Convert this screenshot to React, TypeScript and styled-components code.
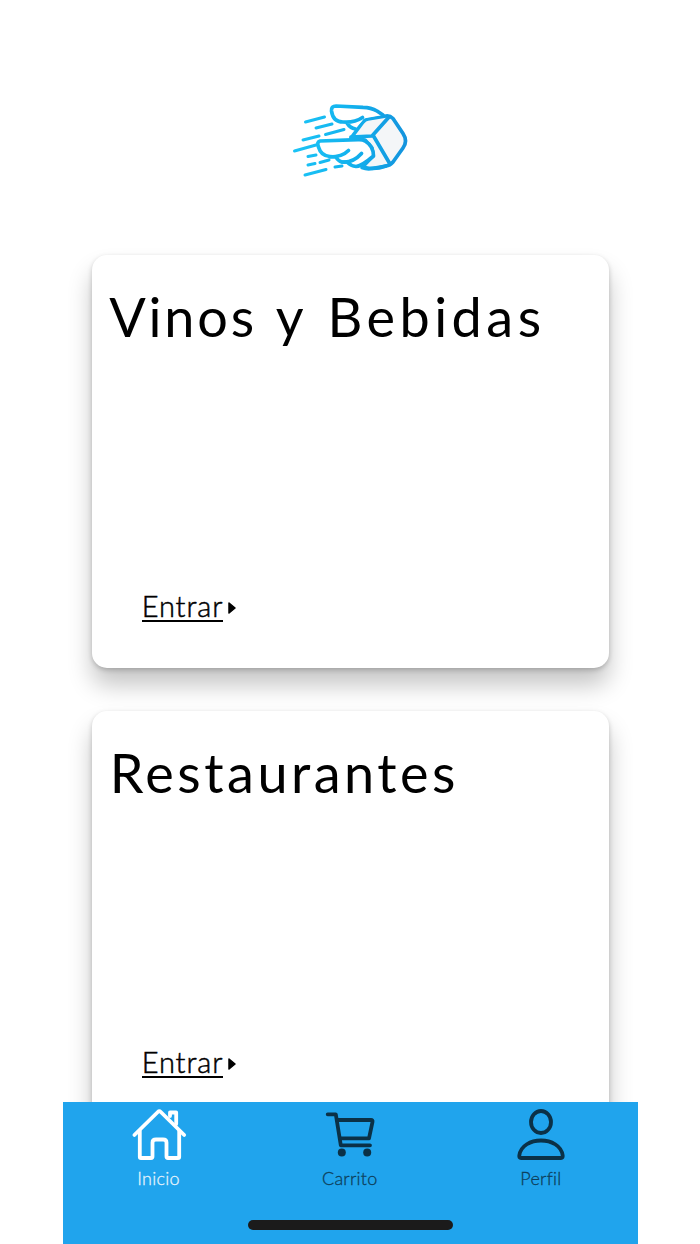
import React from "react";
import styled, { createGlobalStyle } from "styled-components";

const GlobalStyle = createGlobalStyle`
  *, *::before, *::after { box-sizing: border-box; }
  body { margin: 0; background: #fff; overflow: hidden; }
`;

const Screen = styled.div`
  width: 574.5px;
  height: 1244px;
  margin-left: 63px;
  display: flex;
  flex-direction: column;
  overflow: hidden;
  background: #fff;
  color: #000;
  font-family: Lato, "Liberation Sans", sans-serif;
`;

const Header = styled.header`
  flex: none;
  height: 255px;
  padding-top: 95px;
  display: flex;
  justify-content: center;
  align-items: flex-start;
`;

const Scroll = styled.div`
  height: 1101.5px;
  flex: none;
  overflow: hidden;
`;

const CardList = styled.div`
  display: flex;
  flex-direction: column;
  align-items: center;
  gap: 43px;
`;

const Card = styled.section`
  width: 517px;
  height: 413px;
  flex: none;
  display: flex;
  flex-direction: column;
  justify-content: space-between;
  align-items: flex-start;
  border-radius: 15px;
  background: #fff;
  box-shadow: 0 17px 24px rgba(0, 0, 0, 0.23), 0 2px 5px rgba(0, 0, 0, 0.2);
`;

const Title = styled.h2<{ $indent: number }>`
  margin: 0;
  padding: 30px 0 0 ${(p) => p.$indent}px;
  font-size: 54px;
  line-height: 64px;
  font-weight: 400;
  letter-spacing: 3.5px;
  word-spacing: 1.5px;
  white-space: nowrap;
`;

const Word = styled.span<{ $spacing: number }>`
  letter-spacing: ${(p) => p.$spacing}px;
`;

const Enter = styled.a`
  display: flex;
  align-items: center;
  gap: 5px;
  margin: 0 0 46px 50px;
  font-size: 29px;
  font-weight: 300;
  color: #000;
`;

const EnterText = styled.span`
  display: block;
  height: 31px;
  line-height: 29px;
  width: 81px;
  border-bottom: 2px solid #000;
  letter-spacing: 0.9px;
  -webkit-text-stroke: 0.5px #000;
  white-space: nowrap;
`;

const Arrow = styled.svg`
  display: block;
  margin-top: 3px;
`;

const Footer = styled.footer`
  flex: none;
  height: 142.5px;
  display: flex;
  flex-direction: column;
  justify-content: space-between;
  align-items: center;
  padding-bottom: 14px;
  background: #20a4ed;
`;

const Tabs = styled.nav`
  width: 100%;
  padding-right: 1px;
  display: grid;
  grid-template-columns: repeat(3, 1fr);
`;

const Tab = styled.div<{ $active?: boolean }>`
  display: flex;
  flex-direction: column;
  align-items: center;
  padding-top: 3.5px;
  color: ${(p) => (p.$active ? "#ffffff" : "#0b3147")};

  span {
    margin-top: 1px;
    font-size: 18px;
    line-height: 24px;
    letter-spacing: 0.25px;
    font-weight: 300;
    -webkit-text-stroke: 0.3px currentColor;
    opacity: 0.88;
  }
`;

const Icon = styled.svg`
  display: block;
  fill: none;
  stroke: currentColor;
  stroke-width: 3.8px;
  stroke-linecap: round;
  stroke-linejoin: round;
`;

const HomeBar = styled.div`
  width: 205px;
  height: 10px;
  border-radius: 5px;
  background: #1b1b1b;
`;

const Logo = () => (
  <svg width="130" height="90" viewBox="0 0 130 90" fill="none">
    <defs>
      <linearGradient id="sky" x1="8" y1="0" x2="122" y2="0" gradientUnits="userSpaceOnUse">
        <stop offset="0" stopColor="#1cc4f6" />
        <stop offset="0.5" stopColor="#12b2ee" />
        <stop offset="1" stopColor="#1493dd" />
      </linearGradient>
    </defs>
    <g stroke="url(#sky)" strokeWidth="3.7" strokeLinecap="round" strokeLinejoin="round">
      <path fill="#f4f6f8" d="M66 43 78 27Q80 24.500 83 24L101 21Q105 20.500 108 23.500L118 38.500Q123 46 118 53L108 67Q105 70.500 101 71L87 73.500Q82 74.500 77 72.500L88 61 87 53 80 45Z" />
      <path d="M66 42 87 41 104 22M88.500 41 105 69" />
      <path fill="#fff" d="M98 20 92 16Q86 12.500 78 12.300L51 11Q46 11 46.500 16Q48 27 58 27L62 27Q67 33 70 34L78 25Q67 29 59 27" stroke="none" />
      <path d="M98 20 92 16Q86 12.500 78 12.300L51 11Q46 11 46.500 16Q48 27 58 27Q69 28 77.500 22.500M62 28Q65 33 70.500 34" />
      <path fill="#fff" d="M35 46Q31.500 47 33.500 52Q36 61 45 61.500L51 62Q53 66 57 67L62 67Q66 71 71 71.500Q77 71 88.500 61Q88.500 51 80 46Q78 44.500 73 44.700Z" />
      <path d="M45 62Q57 62 63.500 55.500M57 67Q68 68 76.500 58.500M80 72.500Q90 75 101 71" />
    </g>
    <g stroke="url(#sky)" strokeWidth="3" strokeLinecap="round">
      <path d="M20.500 27 39.500 22M31 33 47 29M40.500 39.500 59 34.500M18 45 34 41M9.500 56 31 50M23 61.500 31 60M23 70 30 68.500M35 67.500 44 65M20 80 41 74.500M50 72 57 71" />
    </g>
  </svg>
);

const HomeIcon = () => (
  <Icon width="56" height="60" viewBox="0 0 56 60">
    <path d="M3.400 30 26.800 7Q28.300 5.500 29.800 7L53.200 30" />
    <path d="M8.800 26V52Q8.800 53 10 53H20Q21.500 53 21.500 51.500V37.500Q21.500 34.500 25 34.500H32Q35.500 34.500 35.500 37.500V51.500Q35.500 53 37 53H47Q48.200 53 48.200 52V26" />
    <path d="M39 11V7.500H45.200V19" />
  </Icon>
);

const CartIcon = () => (
  <Icon width="56" height="60" viewBox="0 0 56 60">
    <path d="M5.700 9.300H13.800L18.800 40.300H48" />
    <path d="M15 15H49Q51 15 50.500 16.800L47 33.300H18" />
    <g fill="currentColor" stroke="none">
      <circle cx="19.800" cy="47.500" r="4" />
      <circle cx="45.200" cy="47.500" r="4" />
    </g>
  </Icon>
);

const ProfileIcon = () => (
  <Icon width="56" height="60" viewBox="0 0 56 60">
    <ellipse cx="28" cy="17" rx="10" ry="11" />
    <path d="M8 53Q6 53 6.300 50.500C9 30.500 47 30.500 49.700 50.500Q50 53 48 53Z" />
  </Icon>
);

const EnterLink = () => (
  <Enter>
    <EnterText>Entrar</EnterText>
    <Arrow width="8" height="12" viewBox="0 0 8 12">
      <path d="M1 1 7 6 1 11Z" fill="#000" stroke="#000" strokeWidth="1.500" strokeLinejoin="round" />
    </Arrow>
  </Enter>
);

export default function App() {
  return (
    <>
      <GlobalStyle />
      <Screen>
        <Scroll>
          <Header>
            <Logo />
          </Header>
          <CardList>
            <Card>
              <Title $indent={17.5}>
                <Word $spacing={2.8}>Vinos</Word> <Word $spacing={5}>y</Word>{" "}
                <Word $spacing={4.5}>Bebidas</Word>
              </Title>
              <EnterLink />
            </Card>
            <Card>
              <Title $indent={18}>Restaurantes</Title>
              <EnterLink />
            </Card>
          </CardList>
        </Scroll>
        <Footer>
          <Tabs>
            <Tab $active>
              <HomeIcon />
              <span>Inicio</span>
            </Tab>
            <Tab>
              <CartIcon />
              <span>Carrito</span>
            </Tab>
            <Tab>
              <ProfileIcon />
              <span>Perfil</span>
            </Tab>
          </Tabs>
          <HomeBar />
        </Footer>
      </Screen>
    </>
  );
}
